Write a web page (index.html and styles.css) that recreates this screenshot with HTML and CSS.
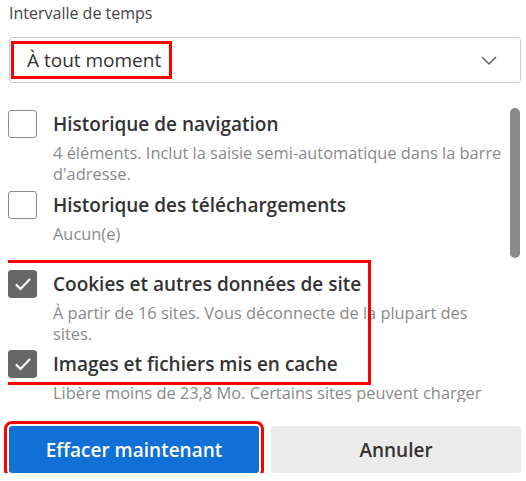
FILE: index.html
```html
<!DOCTYPE html>
<html lang="fr">
<head>
<meta charset="utf-8">
<title>Effacer les données de navigation</title>
<link rel="stylesheet" href="styles.css">
</head>
<body>
<div class="dialog">
  <div class="field-label">Intervalle de temps</div>
  <div class="select">
    <span class="select-value">À tout moment</span>
    <svg class="chevron" width="16" height="9" viewBox="0 0 16 9"><path d="M1 1 L8 8 L15 1" fill="none" stroke="#555" stroke-width="1.4"/></svg>
  </div>
  <div class="list">
    <div class="item">
      <span class="box"></span>
      <span class="title">Historique de navigation</span>
      <span class="desc">4 éléments. Inclut la saisie semi-automatique dans la barre d'adresse.</span>
    </div>
    <div class="item">
      <span class="box"></span>
      <span class="title">Historique des téléchargements</span>
      <span class="desc">Aucun(e)</span>
    </div>
    <div class="group">
      <div class="item">
        <span class="box checked"><svg width="18" height="14" viewBox="0 0 18 14"><path d="M2 7.5 L6.5 12 L16 2" fill="none" stroke="#fff" stroke-width="2.2"/></svg></span>
        <span class="title">Cookies et autres données de site</span>
        <span class="desc">À partir de 16 sites. Vous déconnecte de la plupart des sites.</span>
      </div>
      <div class="item">
        <span class="box checked"><svg width="18" height="14" viewBox="0 0 18 14"><path d="M2 7.5 L6.5 12 L16 2" fill="none" stroke="#fff" stroke-width="2.2"/></svg></span>
        <span class="title">Images et fichiers mis en cache</span>
        <span class="desc">Libère moins de 23,8 Mo. Certains sites peuvent charger plus lentement lors de votre prochaine visite.</span>
      </div>
    </div>
    <div class="scrollbar"></div>
  </div>
  <div class="actions">
    <button class="btn primary">Effacer maintenant</button>
    <button class="btn secondary">Annuler</button>
  </div>
</div>
</body>
</html>
```
FILE: styles.css
```css
html, body {
  margin: 0;
  background: #fff;
}
body {
  font-family: "Open Sans", "Noto Sans", sans-serif;
  color: #333;
}
.dialog {
  width: 513px;
  padding: 0 5px 0 8px;
}
.field-label {
  margin: 3px 0 0 1px;
  font-size: 16px;
  line-height: 20px;
  color: #444;
}
.select {
  margin: 14px 0 0 1px;
  height: 46px;
  box-sizing: border-box;
  border: 1px solid #cdcdcd;
  border-radius: 3px;
  display: flex;
  align-items: center;
  justify-content: space-between;
  padding: 0 23px 0 1px;
}
.select-value {
  box-sizing: border-box;
  height: 38px;
  border: 3px solid #f00;
  padding: 0 8px 0 13px;
  display: flex;
  align-items: center;
  font-size: 19px;
  color: #333;
}
.list {
  position: relative;
  margin-top: 17px;
  height: 302px;
  box-sizing: border-box;
  padding: 10px 16px 0 0;
  overflow: hidden;
  display: flex;
  flex-direction: column;
  gap: 7px;
}
.item {
  display: grid;
  grid-template-columns: 29px 1fr;
  column-gap: 16px;
}
.box {
  width: 29px;
  height: 28px;
  box-sizing: border-box;
  border: 1.5px solid #8c8c8c;
  border-radius: 3px;
  display: flex;
  align-items: center;
  justify-content: center;
}
.box.checked {
  background: #676767;
  border-color: #676767;
}
.title {
  font-size: 19px;
  font-weight: 600;
  line-height: 28px;
  color: #333;
  white-space: nowrap;
}
.desc {
  grid-column: 2;
  margin-top: 4px;
  font-size: 16.4px;
  line-height: 21px;
  color: #8a8a8a;
}
.group {
  position: relative;
  margin-top: 9px;
  padding-top: 10px;
  display: flex;
  flex-direction: column;
  gap: 6px;
}
.group::after {
  content: "";
  position: absolute;
  left: -6px;
  top: 0;
  width: 369px;
  height: 125px;
  box-sizing: border-box;
  border: 3px solid #f00;
}
.scrollbar {
  position: absolute;
  right: 1px;
  top: 8px;
  width: 10px;
  height: 150px;
  border-radius: 5px;
  background: #8a8a8a;
}
.actions {
  margin: 24px 0 0 1px;
  display: grid;
  grid-template-columns: 1fr 1fr;
  gap: 12px;
}
.btn {
  height: 47px;
  border: none;
  border-radius: 3px;
  font-family: inherit;
  font-size: 19px;
  font-weight: 600;
}
.primary {
  background: #1170d6;
  color: #fff;
  outline: 3px solid #f00;
  outline-offset: 2px;
}
.secondary {
  background: #ebebeb;
  color: #333;
}
```
